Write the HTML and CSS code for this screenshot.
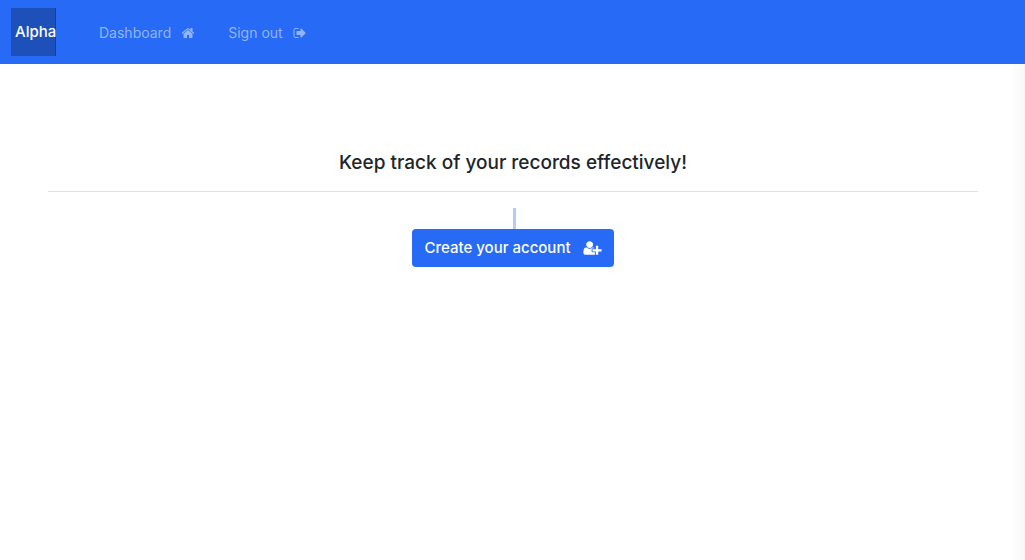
FILE: index.html
```html
<!DOCTYPE html>
<html lang="en">
<head>
<meta charset="utf-8">
<meta name="viewport" content="width=device-width, initial-scale=1">
<title>Alpha</title>
<link rel="stylesheet" href="styles.css">
</head>
<body>
<header class="navbar">
  <a class="brand" href="#">Alpha</a>
  <nav class="nav-links">
    <a class="nav-link" href="#">Dashboard
      <svg class="icon" viewBox="0 0 1792 1792" aria-hidden="true"><path d="M1472 992v480q0 26-19 45t-45 19h-384v-384h-256v384h-384q-26 0-45-19t-19-45v-480q0-1 .5-3t.5-3l575-474 575 474q1 2 1 6zm223-69l-62 74q-8 9-21 11h-3q-13 0-21-7l-692-577-692 577q-12 8-24 7-13-2-21-11l-62-74q-8-10-7-23.5t11-21.5l719-599q32-26 76-26t76 26l244 204v-195q0-14 9-23t23-9h192q14 0 23 9t9 23v408l219 182q10 8 11 21.5t-7 23.5z"/></svg>
    </a>
    <a class="nav-link" href="#">Sign out
      <svg class="icon" viewBox="0 0 1792 1792" aria-hidden="true"><path d="M704 1440q0 4 1 20t.5 26.5-3 23.5-10 19.5-20.5 6.5h-320q-119 0-203.5-84.5t-84.5-203.5v-704q0-119 84.5-203.5t203.5-84.5h320q13 0 22.5 9.5t9.5 22.5q0 4 1 20t.5 26.5-3 23.5-10 19.5-20.5 6.5h-320q-66 0-113 47t-47 113v704q0 66 47 113t113 47h312l11.5 1 11.5 3 8 5.5 7 9 2 13.5zm928-544q0 26-19 45l-544 544q-19 19-45 19t-45-19-19-45v-288h-448q-26 0-45-19t-19-45v-384q0-26 19-45t45-19h448v-288q0-26 19-45t45-19 45 19l544 544q19 19 19 45z"/></svg>
    </a>
  </nav>
</header>
<main class="hero">
  <h1 class="title">Keep track of your records effectively!</h1>
  <hr class="rule">
  <div class="marker"></div>
  <button class="btn" type="button">Create your account
    <svg class="icon-plus" viewBox="0 0 2048 1792" aria-hidden="true"><path d="M704 896q-159 0-271.5-112.5t-112.5-271.5 112.5-271.5 271.5-112.5 271.5 112.5 112.5 271.5-112.5 271.5-271.5 112.5zm960 128h352q13 0 22.5 9.5t9.5 22.5v192q0 13-9.5 22.5t-22.5 9.5h-352v352q0 13-9.5 22.5t-22.5 9.5h-192q-13 0-22.5-9.5t-9.5-22.5v-352h-352q-13 0-22.5-9.5t-9.5-22.5v-192q0-13 9.5-22.5t22.5-9.5h352v-352q0-13 9.5-22.5t22.5-9.5h192q13 0 22.5 9.5t9.5 22.5v352zm-736 224q0 52 38 90t90 38h256v238q-68 50-171 50h-874q-121 0-194-69t-73-190q0-53 3.5-103.5t14-109 26.5-108.5 43-97.5 62-81 85.5-53.5 111.5-20q19 0 39 17 79 61 154.5 91.5t164.5 30.5 164.5-30.5 154.5-91.5q20-17 39-17 132 0 217 96h-223q-52 0-90 38t-38 90v192z"/></svg>
  </button>
</main>
</body>
</html>
```

FILE: styles.css
```css
* { box-sizing: border-box; }
body {
  margin: 0;
  min-height: 100vh;
  font-family: Inter, "Liberation Sans", sans-serif;
  font-size: 15px;
  line-height: 24px;
  color: #212529;
  background: linear-gradient(to left, #f8f8f8, #fff 14px);
}
.navbar {
  display: flex;
  align-items: center;
  gap: 43px;
  padding: 8px 11px;
  background: #266af6;
}
.brand {
  display: flex;
  align-items: center;
  width: 45px;
  height: 48px;
  padding-left: 4px;
  border-right: 1px solid #173f93;
  background: #1d50b9;
  color: #fff;
  font-weight: 500;
  text-decoration: none;
}
.nav-links {
  display: flex;
  gap: 33px;
  padding-top: 2px;
}
.nav-link {
  display: flex;
  align-items: center;
  gap: 10px;
  font-size: 14px;
  color: #92b4fa;
  text-decoration: none;
}
.icon { width: 14px; height: 14px; fill: currentColor; }
.hero {
  display: flex;
  flex-direction: column;
  align-items: center;
  padding: 87px 47px 48px 48px;
}
.title {
  margin: 0;
  font-size: 19px;
  line-height: 24px;
  font-weight: 500;
}
.rule {
  width: 100%;
  height: 1px;
  margin: 16px 0;
  border: 0;
  background: #e1e1e1;
}
.marker {
  width: 3px;
  height: 21px;
  margin-left: 3px;
  background: #b3cdfa;
}
.btn {
  display: flex;
  align-items: center;
  gap: 12px;
  padding: 7px 12px;
  border: 0;
  border-radius: 4px;
  background: #266af6;
  color: #fff;
  font: inherit;
  font-weight: 500;
  cursor: pointer;
}
.icon-plus { width: 19px; height: 16px; fill: currentColor; }
```
